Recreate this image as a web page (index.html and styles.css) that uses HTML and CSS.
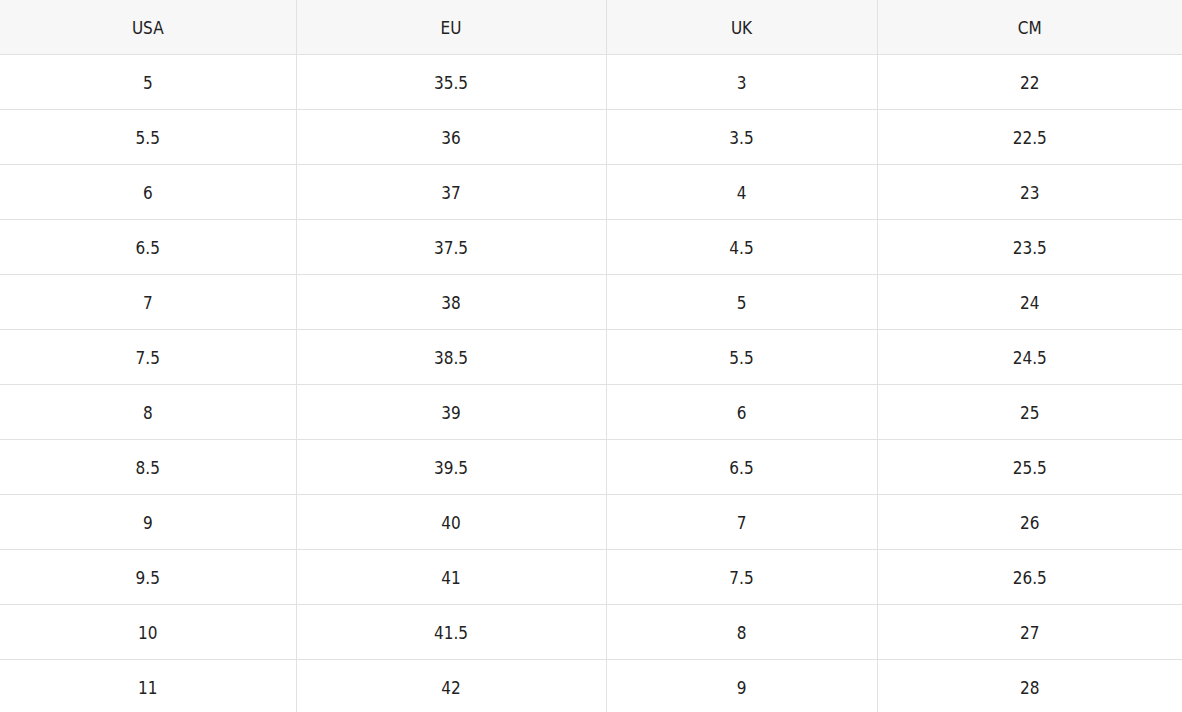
FILE: index.html
```html
<!DOCTYPE html>
<html>
<head>
<meta charset="utf-8">
<link rel="stylesheet" href="styles.css">
</head>
<body>
<table class="size-table">
  <colgroup>
    <col class="c1"><col class="c2"><col class="c3"><col class="c4">
  </colgroup>
  <thead>
    <tr><th>USA</th><th>EU</th><th>UK</th><th>CM</th></tr>
  </thead>
  <tbody>
    <tr><td>5</td><td>35.5</td><td>3</td><td>22</td></tr>
    <tr><td>5.5</td><td>36</td><td>3.5</td><td>22.5</td></tr>
    <tr><td>6</td><td>37</td><td>4</td><td>23</td></tr>
    <tr><td>6.5</td><td>37.5</td><td>4.5</td><td>23.5</td></tr>
    <tr><td>7</td><td>38</td><td>5</td><td>24</td></tr>
    <tr><td>7.5</td><td>38.5</td><td>5.5</td><td>24.5</td></tr>
    <tr><td>8</td><td>39</td><td>6</td><td>25</td></tr>
    <tr><td>8.5</td><td>39.5</td><td>6.5</td><td>25.5</td></tr>
    <tr><td>9</td><td>40</td><td>7</td><td>26</td></tr>
    <tr><td>9.5</td><td>41</td><td>7.5</td><td>26.5</td></tr>
    <tr><td>10</td><td>41.5</td><td>8</td><td>27</td></tr>
    <tr><td>11</td><td>42</td><td>9</td><td>28</td></tr>
  </tbody>
</table>
</body>
</html>
```
FILE: styles.css
```css
html, body {
  margin: 0;
  padding: 0;
  background: #ffffff;
}
body {
  font-family: "DejaVu Sans", "Liberation Sans", sans-serif;
  font-stretch: condensed;
  color: #222222;
  overflow: hidden;
}
.size-table {
  width: 1182px;
  border-collapse: collapse;
  table-layout: fixed;
}
.c1 { width: 296px; }
.c2 { width: 310px; }
.c3 { width: 271px; }
.c4 { width: 305px; }
.size-table th,
.size-table td {
  text-align: center;
  font-size: 17px;
  font-weight: normal;
  padding: 2px 0 0 0;
  border-bottom: 1px solid #e1e1e1;
  border-left: 1px solid #e1e1e1;
}
.size-table th:first-child,
.size-table td:first-child {
  border-left: none;
}
.size-table th {
  height: 52px;
  background: #f7f7f7;
}
.size-table td {
  height: 52px;
}
```
